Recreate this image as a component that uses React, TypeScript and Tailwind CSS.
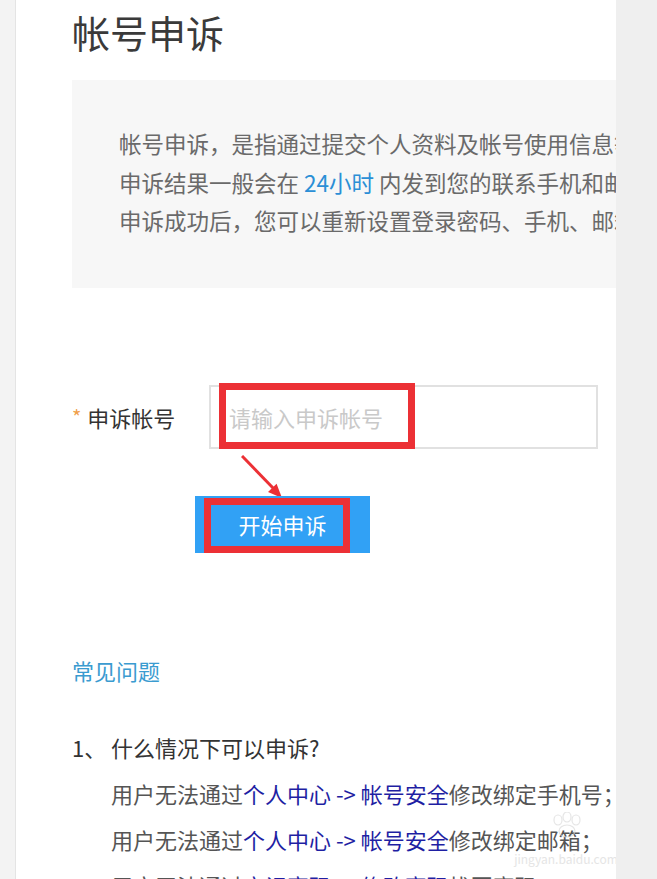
import { FC } from 'react';

const font = { fontFamily: '"Noto Sans CJK SC", "Noto Sans", sans-serif' };

const Link: FC<{ children: string }> = ({ children }) => <span className="text-[#1f1fa3]">{children}</span>;

const App: FC = () => {
  return (
    <div style={font} className="flex h-screen w-full overflow-hidden bg-white">
      {/* left rail */}
      <div className="h-full w-[16px] shrink-0 border-r border-[#e4e4e4] bg-[#f3f3f3]" />

      {/* main column */}
      <div className="relative h-full w-[600px] shrink-0 overflow-hidden pl-[56px]">
        <h1 className="pt-2 text-[38px] leading-[48px] font-normal text-[#3a3a3a]">帐号申诉</h1>

        <div className="mt-[24px] h-[208px] overflow-hidden whitespace-nowrap bg-[#f7f7f7] pt-[44px] pl-[47px] text-[22.5px] leading-[38.5px] text-[#6a6a6a]">
          <p>帐号申诉，是指通过提交个人资料及帐号使用信息等进行验证</p>
          <p>
            申诉结果一般会在 <span className="text-[#2b8fd6]">24小时</span> 内发到您的联系手机和邮箱
          </p>
          <p>申诉成功后，您可以重新设置登录密码、手机、邮箱</p>
        </div>

        {/* form */}
        <div className="relative mt-[97px]">
          <div className="flex items-center">
            <div className="flex w-[137px] items-center text-[22px] text-[#333]">
              <span className="mr-[6px] text-[20px] leading-[20px] text-[#f0a04b]">*</span>
              <span>申诉帐号</span>
            </div>
            <div className="relative flex h-[64px] w-[389px] items-center border-2 border-[#e1e1e1] pl-[18px] text-[22px] text-[#c9c9c9]">
              请输入申诉帐号
              <div className="absolute top-[-4px] left-[8px] h-[66px] w-[196px] border-[7px] border-[#ec3035]" />
            </div>
          </div>

          <svg className="absolute top-[70px] left-[169px]" width="50" height="50" viewBox="0 0 50 50">
            <line x1="1" y1="1" x2="33" y2="34" stroke="#ec3035" strokeWidth="3" />
            <polygon points="41,43 27,37 35.6,28.8" fill="#ec3035" />
          </svg>

          <div className="mt-[47px] ml-[123px]">
            <button className="relative flex h-[57px] w-[175px] items-center justify-center bg-[#31a1f5] text-[22px] text-white">
              开始申诉
              <span className="absolute top-[2px] left-[9px] h-[55px] w-[146px] border-[7px] border-[#ec3035]" />
            </button>
          </div>
        </div>

        <div className="mt-[101px] text-[22px] leading-[32px] text-[#3a9bd0]">常见问题</div>

        <div className="mt-[38px] flex whitespace-nowrap text-[22px] leading-[46px]">
          <span className="w-[39px] shrink-0 text-[#333]">1、</span>
          <div className="flex flex-col">
            <span className="text-[#333]">什么情况下可以申诉?</span>
            <span className="text-[#555]">
              用户无法通过<Link>个人中心 -&gt; 帐号安全</Link>修改绑定手机号；
            </span>
            <span className="text-[#555]">
              用户无法通过<Link>个人中心 -&gt; 帐号安全</Link>修改绑定邮箱；
            </span>
            <span className="text-[#555]">
              用户无法通过<Link>忘记密码 -&gt; 修改密码</Link>找回密码；
            </span>
          </div>
        </div>

        {/* watermark */}
        <div className="pointer-events-none absolute top-[812px] left-[495px] flex w-[110px] flex-col items-center opacity-60">
          <svg width="40" height="26" viewBox="0 0 40 26">
            <g fill="none" stroke="#d6d6d6" strokeWidth="1.2">
              <ellipse cx="12" cy="8" rx="4" ry="5" />
              <ellipse cx="21" cy="5" rx="4" ry="5" />
              <ellipse cx="30" cy="8" rx="4" ry="5" />
              <ellipse cx="21" cy="19" rx="8" ry="6" />
            </g>
          </svg>
          <div className="mt-[14px] text-[12px] leading-[14px] text-[#d4d4d4]">jingyan.baidu.com</div>
        </div>
      </div>

      {/* right rail */}
      <div className="h-full flex-1 bg-[#efefef]" />
    </div>
  );
};

export default App;
